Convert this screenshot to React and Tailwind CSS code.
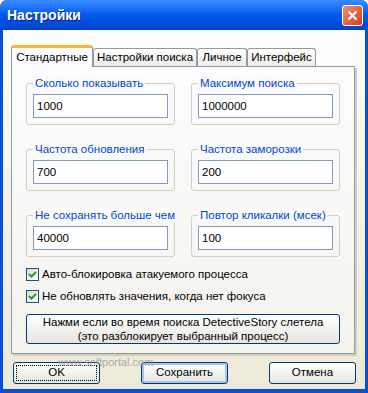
import { useState } from 'react'

const GROUPS = [
  ['Сколько показывать', '1000'],
  ['Максимум поиска', '1000000'],
  ['Частота обновления', '700'],
  ['Частота заморозки', '200'],
  ['Не сохранять больше чем', '40000'],
  ['Повтор кликалки (мсек)', '100'],
]

// tab widths are fixed, as in the reference
const TABS = [
  { label: 'Стандартные', w: 'w-[82px]' },
  { label: 'Настройки поиска', w: 'w-[104px]' },
  { label: 'Личное', w: 'w-[50px]' },
  { label: 'Интерфейс', w: 'w-[69px]' },
]

function Group({ label, value }) {
  return (
    <div className="relative h-[42px] rounded-[3px] border border-[#D0D0BF] px-[6px] pt-[10px]">
      <span className="absolute left-[6px] top-[-8px] whitespace-nowrap bg-[#FAFAF9] px-[2px] text-[#0046D5] leading-[14px]">{label}</span>
      <div className="h-[24px] border border-[#7F9DB9] bg-white px-[3px] leading-[22px] text-black">{value}</div>
    </div>
  )
}

function Check({ label }) {
  return (
    <div className="flex h-[13px] items-center gap-[3px]">
      <div className="flex h-[13px] w-[13px] items-center justify-center border border-[#1C5180] bg-gradient-to-br from-[#DCDCD7] to-white">
        <svg width="9" height="9" viewBox="0 0 9 9">
          <path d="M1 4 L3.5 6.5 L8 2" stroke="#21A121" strokeWidth="2" fill="none" />
        </svg>
      </div>
      <span className="text-black">{label}</span>
    </div>
  )
}

function XpButton({ children, focus, def }) {
  return (
    <button
      type="button"
      className={`h-[22px] w-[87px] rounded-[3px] border border-[#003C74] bg-gradient-to-b from-white to-[#E6E5DE] p-[2px] text-black ${def ? 'shadow-[inset_0_0_0_2px_#A9C4F2]' : ''}`}
    >
      <div className={`flex h-full items-center justify-center ${focus ? 'border border-dotted border-black' : ''}`}>{children}</div>
    </button>
  )
}

export default function App() {
  const [tab] = useState(0)

  return (
    <div className="relative h-[393px] w-[368px] overflow-hidden rounded-t-[7px] bg-[#0A4FDB] text-[11.5px] [font-family:'Liberation_Sans',Arial,sans-serif]">
      <div className="flex h-[30px] items-center justify-between bg-gradient-to-b from-[#3A8CFF] via-[#0058EE] to-[#0044CC] pl-[7px] pr-[5px]">
        <span className="text-[14px] font-bold text-white [text-shadow:1px_1px_0_#0A1F74]">Настройки</span>
        <div className="flex h-[21px] w-[21px] items-center justify-center rounded-[3px] border border-white bg-gradient-to-br from-[#F0906C] to-[#D43A12]">
          <svg width="11" height="11" viewBox="0 0 11 11">
            <path d="M1.5 1.5 L9.5 9.5 M9.5 1.5 L1.5 9.5" stroke="white" strokeWidth="2" />
          </svg>
        </div>
      </div>

      <div className="mx-[3px] h-[359px] bg-gradient-to-b from-[#FCFCFB] to-[#ECE9D8] px-[8px] pt-[15px]">
        <div className="flex h-[21px] items-end">
          {TABS.map((t, i) => (
            <div
              key={t.label}
              className={
                i === tab
                  ? `relative z-10 mb-[-1px] flex h-[22px] ${t.w} items-center justify-center whitespace-nowrap rounded-t-[3px] border-x border-t-[3px] border-x-[#919B9C] border-t-[#F5B23A] bg-[#FCFCFE] text-black`
                  : `flex h-[18px] ${t.w} items-center justify-center whitespace-nowrap rounded-t-[3px] border border-b-0 border-[#919B9C] bg-gradient-to-b from-white to-[#ECEBE6] text-black`
              }
            >
              {t.label}
            </div>
          ))}
        </div>

        <div className="flex h-[288px] w-[344px] flex-col border border-[#919B9C] bg-gradient-to-b from-[#FCFCFE] to-[#F4F3EE] px-[14px] pt-[16px] shadow-[2px_2px_0_#D0CEBF]">
          <div className="grid grid-cols-2 gap-x-[16px] gap-y-[24px]">
            {GROUPS.map(([l, v]) => <Group key={l} label={l} value={v} />)}
          </div>
          <div className="mt-[11px] flex flex-col gap-[9px]">
            <Check label="Авто-блокировка атакуемого процесса" />
            <Check label="Не обновлять значения, когда нет фокуса" />
          </div>
          <button
            type="button"
            className="mt-[11px] h-[30px] w-[314px] rounded-[3px] border border-[#003C74] bg-gradient-to-b from-white to-[#E6E5DE] leading-[14px] text-black"
          >
            Нажми если во время поиска DetectiveStory слетела<br />(это разблокирует выбранный процесс)
          </button>
        </div>

        <div className="mt-[8px] flex justify-between pl-[2px] pr-[1px]">
          <XpButton focus>OK</XpButton>
          <XpButton def>Сохранить</XpButton>
          <XpButton>Отмена</XpButton>
        </div>
      </div>

      <span className="pointer-events-none absolute left-[58px] top-[354px] text-[11px] text-[#9A9A9A] opacity-80">www.softportal.com</span>
    </div>
  )
}
